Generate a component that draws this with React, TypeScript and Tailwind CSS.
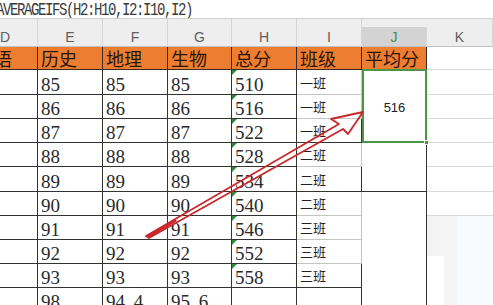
import React from "react";

const E = ["85", "86", "87", "88", "89", "90", "91", "92", "93", "98"];
const F = ["85", "86", "87", "88", "89", "90", "91", "92", "93", "94.4"];
const G = ["85", "86", "87", "88", "89", "90", "91", "92", "93", "95.6"];
const H = ["510", "516", "522", "528", "534", "540", "546", "552", "558", ""];
const I = ["一班", "一班", "一班", "二班", "二班", "二班", "三班", "三班", "三班", ""];
const iBottom = [
  "border-b border-[#c4c4c4]",
  "border-b border-[#c4c4c4]",
  "border-b border-[#333333]",
  "border-b border-[#c4c4c4]",
  "border-b border-[#333333]",
  "border-b border-[#c4c4c4]",
  "border-b border-[#c4c4c4]",
  "border-b border-[#c4c4c4]",
  "border-b border-[#333333]",
  "",
];

const num =
  "flex items-end pl-[3px] text-[19px] leading-none font-['Liberation_Serif',serif] text-[#2a2a2a] border-r border-b border-[#333333] whitespace-pre";
const head =
  "flex items-center pl-[3px] text-[18px] leading-none font-['Noto_Sans_CJK_SC',sans-serif] text-[#2a1608] bg-[#ed7d31] border-r border-b border-[#3a2a20]";
const colHead =
  "flex items-end justify-center pb-[2px] text-[14px] leading-none font-['Liberation_Sans',sans-serif] text-[#5e5e5e] border-r border-[#d6d6d6]";

function Num({ v }: { v: string }) {
  if (v.includes(".")) {
    const [a, b] = v.split(".");
    return (
      <span>
        {a}
        <span className="mr-[4px]">.</span>
        {b}
      </span>
    );
  }
  return <span>{v}</span>;
}

export default function App() {
  const rows = E.map((_, i) => i);
  return (
    <div className="relative w-[493px] h-[305px] overflow-hidden bg-white">
      {/* formula bar */}
      <div className="h-[19px] border-b border-[#d0d0d0] bg-white flex items-center overflow-hidden pt-[2px]">
        <span className="-ml-[4px] text-[14px] leading-none tracking-[-1.4px] scale-y-125 font-['Liberation_Mono',monospace] text-[#3a3a3a] whitespace-nowrap">
          AVERAGEIFS(H2:H10,I2:I10,I2)
        </span>
      </div>

      {/* column letters */}
      <div className="-ml-[27px] grid grid-cols-[65px_65px_65px_64px_65px_65px_65px_66px] h-[28px] bg-[#eeeeee] border-b border-[#c2c2c2]">
        <div className={colHead}>D</div>
        <div className={colHead}>E</div>
        <div className={colHead}>F</div>
        <div className={colHead}>G</div>
        <div className={colHead}>H</div>
        <div className={colHead}>I</div>
        <div className="flex items-end justify-center pb-[2px] text-[14px] leading-none font-['Liberation_Sans',sans-serif] text-[#4a8f45] bg-[#d3d3d3] mt-[8px] border-r border-[#d6d6d6]">
          J
        </div>
        <div className={colHead}>K</div>
      </div>

      {/* sheet */}
      <div className="-ml-[27px] grid grid-cols-[65px_65px_65px_64px_65px_65px_65px_66px] grid-rows-[23px_25px_24px_24px_24px_25px_24px_24px_24px_24px_24px]">
        {/* header row */}
        <div className={head}>英语</div>
        <div className={head}>历史</div>
        <div className={head}>地理</div>
        <div className={head}>生物</div>
        <div className={head}>总分</div>
        <div className={head}>班级</div>
        <div className={head}>平均分</div>
        <div className="bg-white border-b border-[#d9d9d9]"></div>

        {/* merged selected cell J2:J4 */}
        <div className="relative col-start-7 row-start-2 row-span-3 z-10 border-2 border-[#4c9447] -mt-[1px] flex items-center justify-center pt-[3px] text-[13px] leading-none font-['Liberation_Sans',sans-serif] text-[#222222]">
          516
          <div className="absolute -right-[4px] -bottom-[4px] w-[5px] h-[5px] bg-[#4c9447] border border-white"></div>
        </div>

        {/* K lower blurred area */}
        <div className="col-start-8 row-start-8 row-span-4 flex">
          <div className="w-[17px] flex flex-col">
            <div className="h-[40px] bg-[#f3f3f3]"></div>
            <div className="flex-1 bg-white"></div>
          </div>
          <div className="w-[13px] bg-[#f5f5f5]"></div>
          <div className="flex-1 bg-[#f7fbfd]"></div>
        </div>

        {rows.map((i) => (
          <React.Fragment key={i}>
            <div className="border-r border-b border-[#333333]"></div>
            <div className={num}>
              <Num v={E[i]} />
            </div>
            <div className={num}>
              <Num v={F[i]} />
            </div>
            <div className={num}>
              <Num v={G[i]} />
            </div>
            <div className={"relative " + num}>
              {H[i] !== "" && (
                <div className="absolute top-0 left-0 w-0 h-0 border-t-[5px] border-t-[#2f8a3a] border-r-[5px] border-r-transparent"></div>
              )}
              {H[i]}
            </div>
            <div
              className={
                "flex items-center pl-[3px] text-[13px] leading-none font-['Noto_Sans_CJK_SC',sans-serif] text-[#222222] border-r border-[#333333] " +
                iBottom[i]
              }
            >
              {I[i]}
              {i === 9 && (
                <div className="ml-auto self-end w-[9px] h-[6px] bg-[#8c8c8c] border-b-2 border-[#3a3a3a]"></div>
              )}
            </div>
            {i >= 3 && (
              <div
                className={
                  i === 4
                    ? "border-r border-b border-[#333333]"
                    : "border-r border-[#333333]"
                }
              ></div>
            )}
            {i <= 5 && <div className="border-b border-[#d9d9d9]"></div>}
          </React.Fragment>
        ))}
      </div>

      {/* annotation arrow */}
      <svg
        className="absolute inset-0 pointer-events-none z-20"
        width="493"
        height="305"
        viewBox="0 0 493 305"
      >
        <path
          d="M146 236 L339 124 L331 119 L363 112 L348 134 L343 129 L149 238 Z"
          fill="none"
          stroke="#c9282b"
          strokeWidth="1.8"
          strokeLinejoin="round"
        />
        <path d="M146 236 L175 219 L177 221 L149 238 Z" fill="#c9282b" />
      </svg>
    </div>
  );
}
